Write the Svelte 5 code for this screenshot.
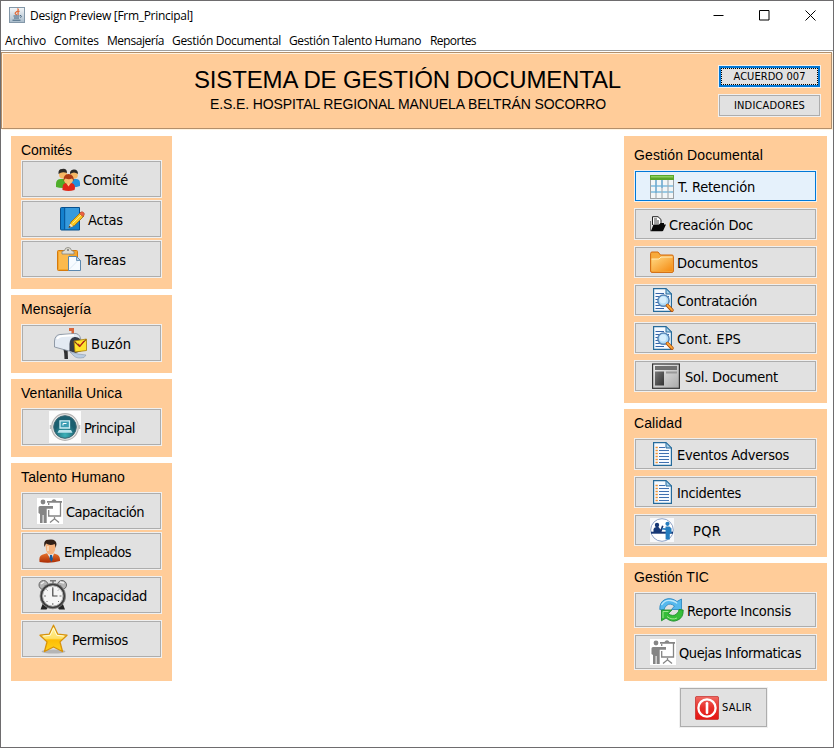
<script>
  const menus = [
    { text: 'Archivo', w: 41, gap: 8 },
    { text: 'Comites', w: 45, gap: 8 },
    { text: 'Mensajería', w: 57, gap: 8 },
    { text: 'Gestión Documental', w: 109, gap: 8 },
    { text: 'Gestión Talento Humano', w: 132, gap: 9 },
    { text: 'Reportes', w: 46, gap: 0 }
  ];

  // x: icon inset inside the button, gap: icon to caption, w: caption width, mt: space above
  const left = [
    {
      title: 'Comités', w: 51, head: 24, height: 153,
      items: [
        { icon: 'people', x: 34, gap: 3, text: 'Comité', w: 45, drop: true },
        { icon: 'book', x: 38, gap: 2, text: 'Actas', w: 35, mt: 2 },
        { icon: 'clipboard', x: 35, gap: 4, text: 'Tareas', w: 41, mt: 2 }
      ]
    },
    {
      title: 'Mensajería', w: 70, head: 29, height: 78,
      items: [{ icon: 'mailbox', x: 32, gap: 4, text: 'Buzón', w: 40 }]
    },
    {
      title: 'Ventanilla Unica', w: 101, head: 29, height: 78,
      items: [{ icon: 'terminal', x: 27, gap: 3, text: 'Principal', w: 51 }]
    },
    {
      title: 'Talento Humano', w: 104, head: 29, height: 218,
      items: [
        { icon: 'training', x: 15, gap: 3, text: 'Capacitación', w: 78 },
        { icon: 'employee', x: 17, gap: 3, text: 'Empleados', w: 67 },
        { icon: 'clock', x: 16, gap: 4, text: 'Incapacidad', w: 75 },
        { icon: 'star', x: 17, gap: 4, text: 'Permisos', w: 56 }
      ].map((it, i) => ({ ...it, mt: [0, 2, 6, 6][i] }))
    }
  ];

  const right = [
    {
      title: 'Gestión Documental', w: 129, head: 34, height: 267, tall: true,
      items: [
        { icon: 'table', x: 15, gap: 4, text: 'T. Retención', w: 77, hot: true, drop: true },
        { icon: 'blackfolder', x: 15, gap: 3, text: 'Creación Doc', w: 84 },
        { icon: 'folder', x: 15, gap: 3, text: 'Documentos', w: 81 },
        { icon: 'search', x: 15, gap: 3, text: 'Contratación', w: 80 },
        { icon: 'search', x: 15, gap: 3, text: 'Cont. EPS', w: 64 },
        { icon: 'layout', x: 17, gap: 5, text: 'Sol. Document', w: 93 }
      ].map((it, i) => ({ ...it, h: 32, mt: i ? 6 : 0 }))
    },
    {
      title: 'Calidad', w: 48, head: 29, height: 148,
      items: [
        { icon: 'list', x: 15, gap: 3, text: 'Eventos Adversos', w: 112 },
        { icon: 'list', x: 15, gap: 3, text: 'Incidentes', w: 64 },
        { icon: 'service', x: 15, gap: 19, text: 'PQR', w: 28 }
      ].map((it, i) => ({ ...it, h: 32, mt: i ? 6 : 0 }))
    },
    {
      title: 'Gestión TIC', w: 75, head: 29, height: 118,
      items: [
        { icon: 'refresh', x: 24, gap: 3, text: 'Reporte Inconsis', w: 104, h: 36 },
        { icon: 'training', x: 15, gap: 3, text: 'Quejas Informaticas', w: 122, h: 36, mt: 6 }
      ]
    }
  ];

  // Spreads the letters of a caption so that it fills the given width.
  function fit(node, width) {
    const natural = node.getBoundingClientRect().width;
    node.style.letterSpacing = (width - natural) / node.textContent.length + 'px';
  }
</script>

{#snippet icon(name)}
  {#if name === 'people'}
    <svg width="24" height="24" viewBox="0 0 24 24">
      <path d="M0 16q0-5 5-5h4q4 0 4 5v3q-7 2-13 0z" fill="#4fae2a" />
      <path d="M13 15q0-4 4-4h3q4 0 4 4v3q-5 2-11 1z" fill="#2491dd" />
      <circle cx="7" cy="6.500" r="4" fill="#f6b765" />
      <circle cx="18" cy="7" r="3.800" fill="#f6b765" />
      <path d="M2.500 6Q2 1 6 1q5-1 5 4Q6 3 2.500 6z" fill="#2d2b29" />
      <path d="M14 6q-.5-4 3.500-4.500Q22 1 22 6q-4-3-8 0z" fill="#2d2b29" />
      <path d="M6.500 20q0-5 4-5h4q4.500 0 4.500 5l-.5 2q-6 2-12 0z" fill="#e02718" />
      <circle cx="12.500" cy="11.500" r="4.600" fill="#f9bf70" />
      <path d="M7.500 13.500Q7 6 12.500 6T18 13.500q-1-2-2-3-3 1.500-6.500 0-1.500 1-2 3z" fill="#ae3b14" />
      <path d="M10.500 15.500l2 3 2-3z" fill="#fbd08d" />
    </svg>
  {:else if name === 'book'}
    <svg width="26" height="24" viewBox="0 0 26 24">
      <path d="M.5 1.500Q.5.5 1.500.5h18v22.500h-18q-1 0-1-1z" fill="#1581cd" stroke="#07508e" />
      <path d="M4.500 1v22" stroke="#0a5c9f" />
      <path d="M5.500 1h13.500v10L9 22H5.500z" fill="#54afea" opacity=".55" />
      <path d="M9 20.500l2-5.500L20.500 5.500l3.500 3.500L14.500 18.500z" fill="#f9c51f" stroke="#9a6810" stroke-width=".8" />
      <path d="M12.500 16.500L21.800 7.300" stroke="#fff08b" />
      <path d="M19.500 6.500l1.500-1.500q1.200-.8 2.700.6 1.200 1.400.3 2.600l-1.200 1.300z" fill="#ee6144" stroke="#a9452d" stroke-width=".6" />
      <path d="M8.500 21l1.700-4.500 3 2.700z" fill="#f4e2bd" /><path d="M8.500 21l1-2.200 1.300 1.200z" fill="#222" />
    </svg>
  {:else if name === 'clipboard'}
    <svg width="24" height="24" viewBox="0 0 24 24">
      <rect x=".5" y="3.500" width="20" height="20" rx="1" fill="#f4a62d" stroke="#d67a0b" />
      <path d="M2 5h10v17H2z" fill="#ffc35b" opacity=".7" />
      <path d="M5 7V4.500l2.500-1Q8 .5 11 .5t3.500 3l2.500 1V7z" fill="#dedcd2" stroke="#85847d" stroke-width=".8" />
      <circle cx="11" cy="3" r="1" fill="#777" />
      <path d="M11.500 9.500h8l4 4v10h-12z" fill="#f7fbff" stroke="#5c87ad" />
      <path d="M19.500 9.500v4h4z" fill="#bcd5eb" stroke="#5c87ad" stroke-width=".8" />
      <path d="M12.500 22l8-8" stroke="#dce8f3" />
    </svg>
  {:else if name === 'mailbox'}
    <svg width="33" height="32" viewBox="0 0 33 32">
      <path d="M9 20h4.500l.5 12h-3.500l-.3-6z" fill="#303030" />
      <path d="M17.500 8V4H15V1h5v8z" fill="#d9663c" />
      <path d="M.5 20V14Q1 8 6 7.500l16-1q5 1 5 9v6L15 24z" fill="#e3eaf3" stroke="#7b8796" stroke-width=".8" />
      <path d="M3 12q2-3 5-3l12-.8" stroke="#fff" stroke-width="2" fill="none" />
      <path d="M15.500 24v-7q0-6 5-7 6-.5 7 6v8l-6 2z" fill="#353b48" />
      <path d="M16 25l8 2 8 1-2 2.500q-7 1.500-10-1.500z" fill="#b9cce3" stroke="#8998ab" stroke-width=".6" />
      <path d="M20 14l12.500-2v11.500L21 25z" fill="#ffe32e" stroke="#a77e06" stroke-width=".8" />
      <path d="M20.500 14.500l5 5 6.500-7" fill="none" stroke="#7a3a18" stroke-width="1.100" />
      <path d="M24 17l2 2 4-5" fill="none" stroke="#c2201a" stroke-width="1.200" />
    </svg>
  {:else if name === 'terminal'}
    <svg width="32" height="32" viewBox="0 0 32 32">
      <defs>
        <radialGradient id="teal" cx=".5" cy=".85"><stop offset="0" stop-color="#3ab2b9" /><stop offset="1" stop-color="#1b5f70" /></radialGradient>
      </defs>
      <rect width="32" height="32" fill="#fcfcfc" />
      <circle cx="16" cy="16" r="13.300" fill="#e6e6e6" stroke="#b4b4b4" stroke-width="1.200" />
      <path d="M1.500 14v4M30.500 14v4" stroke="#bbb" stroke-width="1.500" />
      <circle cx="16" cy="16" r="11.300" fill="url(#teal)" stroke="#3a6672" />
      <path d="M11 9.800h9.500v7.200H11z" fill="#3c9db2" stroke="#cceef5" stroke-width="1.300" />
      <path d="M14 14.500V12.500h3.500" fill="none" stroke="#fff" />
      <path d="M10 19h12l1.500 2.800h-15z" fill="#bce3ec" />
    </svg>
  {:else if name === 'training'}
    <svg width="26" height="26" viewBox="0 0 26 26">
      <rect width="26" height="26" fill="#fff" />
      <g fill="#858585">
        <circle cx="6" cy="4" r="2.400" />
        <path d="M3 8h13v2.700H9.700V25H6.600v-8h-1v8H3v-9L1.500 15V9.500Q1.500 8 3 8z" />
        <path d="M10 3h4.500q.8-1.700 2.500-1.700T19.500 3H25v1.800H10z" />
      </g>
      <path d="M11.700 5v2M23.500 4v14H11.700v-6M17.500 19v1.500M13 24.500l4.500-3.700 4.500 3.700" fill="none" stroke="#858585" stroke-width="1.300" />
    </svg>
  {:else if name === 'employee'}
    <svg width="22" height="24" viewBox="0 0 22 24">
      <defs>
        <linearGradient id="coat" x2="0" y2="1"><stop offset="0" stop-color="#e9752c" /><stop offset="1" stop-color="#a92b04" /></linearGradient>
      </defs>
      <path d="M.5 22q-1-6 5-7l3-1h5l3 1q5 1 4.500 7-10 3-20.500 1z" fill="url(#coat)" />
      <path d="M8 14h7l-2.500 8z" fill="#dfeffa" />
      <path d="M11 16h2l1 4-1.500 3-2-3z" fill="#195b9c" />
      <path d="M6.500 6q0-4 5-4t5 5q0 5-2 7.500-3 2.500-6 0-2-3-2-8.500z" fill="#f6b27d" />
      <path d="M5.500 8Q4 1 9 .7 17-.8 17.500 5l-.8 4-1-4Q11 7 7 4.500z" fill="#322017" />
      <path d="M9 7v5" stroke="#fbd6b1" stroke-width="2" />
    </svg>
  {:else if name === 'clock'}
    <svg width="30" height="30" viewBox="0 0 30 30">
      <path d="M5 23l-2.500 6.500h6l2-3zM24.500 23l2.500 6.500h-6l-2-3z" fill="#242424" />
      <circle cx="5.500" cy="5" r="4.500" fill="#b5b5b5" stroke="#666" />
      <circle cx="24" cy="5" r="4.500" fill="#b5b5b5" stroke="#666" />
      <path d="M3 4l3-2M22 2l4 1" stroke="#eee" stroke-width="1.500" />
      <path d="M12 .8h6M15 1v3" stroke="#777" stroke-width="1.500" />
      <circle cx="14.800" cy="16" r="12.800" fill="#3d3d3d" stroke="#888" stroke-width=".8" />
      <circle cx="14.800" cy="16" r="10.200" fill="#f5f5f5" stroke="#b4b4b4" />
      <path d="M14.800 7v2M14.800 23v2M6 16h2M21.500 16h2M8.500 9.500l1 1M21 9.500l-1 1M8.500 22l1-1M21 22l-1-1" stroke="#777" />
      <path d="M14.800 8.500v7.500h4.700" fill="none" stroke="#444" stroke-width="1.200" />
    </svg>
  {:else if name === 'star'}
    <svg width="29" height="30" viewBox="0 0 29 30">
      <defs>
        <linearGradient id="gold" x2="0" y2="1"><stop offset="0" stop-color="#fff7a8" /><stop offset=".5" stop-color="#ffe066" /><stop offset=".56" stop-color="#fdbd05" /><stop offset="1" stop-color="#ffd31e" /></linearGradient>
      </defs>
      <ellipse cx="14.500" cy="27.500" rx="12" ry="2" fill="#aaa" opacity=".8" />
      <path d="M14.500 1.200l4.300 9 9.200 1-7 6.700 2.500 9.600-9-4.500-9 4.500L8 17.900l-7-6.700 9.200-1z" fill="url(#gold)" stroke="#d7920c" stroke-width="1.300" stroke-linejoin="round" />
      <path d="M14.500 4l-3.300 7.300-7 .8M14.500 4l3.300 7.300 7 .8" fill="none" stroke="#fffbd6" />
    </svg>
  {:else if name === 'table'}
    <svg width="24" height="24" viewBox="0 0 24 24">
      <rect x=".5" y=".5" width="23" height="23" fill="#f3f6f7" stroke="#9ba1a5" />
      <path d="M0 0h24v5H0z" fill="#59a62a" /><path d="M1 1h22v1.500H1z" fill="#8fd05b" />
      <path d="M1 11h22M1 17h22" stroke="#7fbde0" stroke-width="1.300" />
      <path d="M6 5v18.500M12 5v18.500M18 5v18.500" stroke="#a7b0b5" stroke-width="1.200" />
      <path d="M6 5v13M12 5v8" stroke="#5eabdb" stroke-width="1.200" />
    </svg>
  {:else if name === 'blackfolder'}
    <svg width="16" height="16" viewBox="0 0 16 16">
      <path d="M2.500 9V.7H8L11 3.500V8" fill="#fff" stroke="#222" />
      <path d="M4 3h3M4 5h5M4 7h5" stroke="#444" />
      <path d="M.5 5v10h12" fill="none" stroke="#777" />
      <path d="M1 15l2.500-6.500H9L10.500 7H14v1.500h2L13 15z" fill="#080808" />
    </svg>
  {:else if name === 'folder'}
    <svg width="24" height="22" viewBox="0 0 24 22">
      <defs>
        <linearGradient id="manila" x2="1" y2="1"><stop offset="0" stop-color="#ffd984" /><stop offset="1" stop-color="#f58b12" /></linearGradient>
      </defs>
      <path d="M.6 20V2.500Q.6 1 2 1h6l2.500 3H22q1.400 0 1.400 1.500V20q0 1.400-1.400 1.400H2Q.6 21.400.6 20z" fill="#f8aa3c" stroke="#d2690c" />
      <path d="M1.500 20V8H9l2-2h11.500v14z" fill="url(#manila)" />
      <path d="M1.500 8H9l2-2h11.500" fill="none" stroke="#ffedbe" />
    </svg>
  {:else if name === 'search' || name === 'list'}
    <svg width="24" height="24" viewBox="0 0 24 24">
      <path d="M3.600.6h12.400l5.400 5.400v17.400H3.600z" fill="#f6faff" stroke="#266b9b" stroke-width="1.200" />
      <path d="M16 .6V6h5.400z" fill="#a9d2ed" stroke="#266b9b" />
      {#if name === 'list'}
        <path d="M9 5.500h6M9 8.500h10M9 11.500h10M9 14.500h10M9 17.500h10M9 20.500h10" stroke="#3f70b0" />
        <path d="M5.500 5.500h2.300M5.500 8.500h2.300M5.500 11.500h2.300M5.500 14.500h2.300M5.500 17.500h2.300M5.500 20.500h2.300" stroke="#f09231" stroke-width="1.300" />
      {:else}
        <path d="M5.500 5.500H14M5.500 8.500H19M5.500 11.500h13M5.500 14.500h13M5.500 17.500h12M5.500 20.500H14" stroke="#3564a8" />
        <circle cx="13.500" cy="12.700" r="5.600" fill="#b3ddf7" stroke="#5886b7" stroke-width="1.500" />
        <circle cx="13" cy="12" r="3.400" fill="#dff2fe" opacity=".8" />
        <path d="M17.500 17.500l4.500 4.700" stroke="#b3510c" stroke-width="3.400" stroke-linecap="round" />
        <path d="M17.500 17.300l4.500 4.700" stroke="#ffac38" stroke-width="1.800" stroke-linecap="round" />
      {/if}
    </svg>
  {:else if name === 'layout'}
    <svg width="28" height="26" viewBox="0 0 28 26">
      <defs>
        <linearGradient id="page" x2="1" y2="1"><stop offset="0" stop-color="#f2f2f2" /><stop offset="1" stop-color="#a8a8a8" /></linearGradient>
        <linearGradient id="block" x2="1" y2="1"><stop offset="0" stop-color="#777" /><stop offset="1" stop-color="#333" /></linearGradient>
      </defs>
      <rect x=".6" y="1" width="26.800" height="24.300" fill="url(#page)" stroke="#333" stroke-width="1.200" />
      <path d="M3 3h22v4H3z" fill="#707070" /><path d="M3 8.500h9V22.500H3z" fill="url(#block)" />
      <path d="M14 8.500h11v2H14z" fill="#999" />
    </svg>
  {:else if name === 'service'}
    <svg width="24" height="24" viewBox="0 0 24 24">
      <rect width="24" height="24" fill="#f7f8fa" />
      <circle cx="12" cy="12" r="11.300" fill="#fff" stroke="#8ea2c6" />
      <circle cx="7" cy="7" r="2.200" fill="#173876" />
      <path d="M3.500 14v-3q1-2 3-2h2l2 2.500 1.500-4 1.500.5-2 6z" fill="#173876" />
      <path d="M1 13.700h22v2H1z" fill="#173876" />
      <circle cx="17.500" cy="5.800" r="2.100" fill="#247cbe" />
      <path d="M15.500 8.500h4l2 2v5h-1.700v6h-4.200V12l-3.500-.5V10l3.400.2z" fill="#247cbe" />
    </svg>
  {:else if name === 'refresh'}
    <svg width="25" height="24" viewBox="0 0 25 24">
      <path d="M.8 11.500Q.5 4 6 1.500 12-1 18 3.500L22.500 1v10.500H12.500L15.500 8Q11 4.500 7.500 7.500 5 10 5 12z" fill="#55b8ed" stroke="#2281be" stroke-width=".8" />
      <path d="M2.500 7Q6 1.500 11.500 2.500T18 5.500" stroke="#bce7fc" stroke-width="1.300" fill="none" />
      <path d="M24.200 12q.3 7.500-5.200 10Q13 25 7 20l-4.500 2.800V12h10.300l-3.500 3.700q4.700 3.300 8.200.3 2.500-2.300 2.500-4.500z" fill="#36bd38" stroke="#168624" stroke-width=".8" />
      <path d="M4 20v-6.500h5.500M8 18.500q5 4 10 1.500" stroke="#9be88c" fill="none" />
    </svg>
  {:else if name === 'power'}
    <svg width="24" height="24" viewBox="0 0 24 24">
      <defs>
        <linearGradient id="red" x2="0" y2="1"><stop offset="0" stop-color="#f16c64" /><stop offset=".5" stop-color="#e72d28" /><stop offset="1" stop-color="#e41513" /></linearGradient>
      </defs>
      <rect x=".4" y=".4" width="23.200" height="23.200" rx="1.500" fill="url(#red)" stroke="#c4302c" stroke-width=".8" />
      <circle cx="12" cy="12" r="8.600" fill="none" stroke="#fff" stroke-width="2.300" />
      <path d="M12 7.200v9.600" stroke="#fff" stroke-width="2.600" stroke-linecap="round" />
    </svg>
  {/if}
{/snippet}

{#snippet panel(p)}
  <section class="panel" style:height="{p.height}px">
    <h2 class:low={p.tall} style:height="{p.head}px"><span use:fit={p.w}>{p.title}</span></h2>
    {#each p.items as it}
      <button class="btn" class:hot={it.hot} class:drop={it.drop} style:height="{it.h ?? 38}px" style:margin-top="{it.mt ?? 0}px" style:padding-left="{it.x}px" style:gap="{it.gap}px">
        {@render icon(it.icon)}
        <span class="label" use:fit={it.w}>{it.text}</span>
      </button>
    {/each}
  </section>
{/snippet}

<div class="window">
  <header class="titlebar">
    <svg class="java" width="16" height="16" viewBox="0 0 16 16">
      <defs>
        <linearGradient id="tile" x2="0" y2="1"><stop offset="0" stop-color="#f5f7f9" /><stop offset="1" stop-color="#a9bccb" /></linearGradient>
      </defs>
      <rect x=".5" y=".5" width="15" height="15" fill="url(#tile)" stroke="#8397a8" />
      <path d="M8.500 1.500q2 1.500-1 3.300T8 8M10.500 4q-2 1-1.500 2.200T8.800 8" fill="none" stroke="#e3622b" stroke-width="1.200" />
      <path d="M4.500 9h6M5 11h5M3.500 13.200h8M11 8.500q2.500 0 .5 2.200" fill="none" stroke="#41617c" />
    </svg>
    <span class="caption" use:fit={163}>Design Preview [Frm_Principal]</span>
    <div class="controls">
      <svg width="11" height="11" viewBox="0 0 11 11"><path d="M.5 5.500h10" /></svg>
      <svg width="11" height="11" viewBox="0 0 11 11"><path d="M.5.5h9.500V10H.5z" /></svg>
      <svg width="11" height="11" viewBox="0 0 11 11"><path d="M.5.5l10 10M10.500.5l-10 10" /></svg>
    </div>
  </header>
  <nav>
    {#each menus as m}
      <span class="menu" style:width="{m.w + m.gap}px"><span use:fit={m.w}>{m.text}</span></span>
    {/each}
  </nav>
  <div class="banner">
    <div class="titles">
      <h1><span use:fit={427}>SISTEMA DE GESTIÓN DOCUMENTAL</span></h1>
      <p><span use:fit={396}>E.S.E. HOSPITAL REGIONAL MANUELA BELTRÁN SOCORRO</span></p>
    </div>
    <div class="side">
      <button class="btn small focus"><span use:fit={72}>ACUERDO 007</span></button>
      <button class="btn small"><span use:fit={71}>INDICADORES</span></button>
    </div>
  </div>
  <main>
    <div class="col left">
      {#each left as p}{@render panel(p)}{/each}
    </div>
    <div class="col right">
      {#each right as p}{@render panel(p)}{/each}
      <button class="btn exit">
        {@render icon('power')}
        <span use:fit={30}>SALIR</span>
      </button>
    </div>
  </main>
</div>

<style>
  :global(body) {
    margin: 0;
  }
  .window {
    box-sizing: border-box;
    width: 834px;
    height: 748px;
    border: 1px solid #6e6c6e;
    background: #fff;
    color: #000;
    overflow: hidden;
    font-family: 'Liberation Sans', Arial, sans-serif;
  }
  span {
    white-space: nowrap;
  }
  svg {
    display: block;
    flex: none;
  }
  .titlebar {
    display: flex;
    align-items: center;
    height: 29px;
    padding-left: 8px;
    font: 12px/16px 'Open Sans', 'Noto Sans', sans-serif;
  }
  .java {
    margin-bottom: 1px;
  }
  .caption {
    margin-left: 5px;
    padding-top: 1px;
  }
  .controls {
    display: flex;
    gap: 35px;
    margin-left: auto;
    padding-right: 17px;
  }
  .controls svg {
    fill: none;
    stroke: #000;
    stroke-width: 1;
  }
  nav {
    box-sizing: border-box;
    display: flex;
    height: 20px;
    padding: 3px 0 0 4px;
    font: 12px/16px 'Open Sans', 'Noto Sans', sans-serif;
  }
  .banner {
    box-sizing: border-box;
    display: flex;
    width: 831px;
    height: 77px;
    margin-top: 2px;
    border: 1px solid #b38f6b;
    background: #ffcc99;
    box-shadow: inset 1px 1px #fff3e0, 1px 1px #fff3e0, 0 -1px #fff, 1px -1px #fff, 0 -2px #a0a0a0, 1px -2px #a0a0a0;
  }
  .titles {
    box-sizing: border-box;
    width: 717px;
    padding-left: 192px;
  }
  h1 {
    margin: 13px 0 0;
    font: 24px/28px 'Liberation Sans', Arial, sans-serif;
  }
  p {
    margin: 2px 0 0 16px;
    font: 14px/16px 'Liberation Sans', Arial, sans-serif;
  }
  .side {
    display: flex;
    flex-direction: column;
    gap: 6px;
    width: 103px;
    padding-top: 12px;
    margin-left: -1px;
  }
  .btn {
    box-sizing: border-box;
    display: flex;
    align-items: center;
    flex: none;
    width: 100%;
    margin: 0;
    padding: 0;
    border: 1px solid #f0f0f0;
    outline: 1px solid #adadad;
    outline-offset: -2px;
    background: #e1e1e1;
    color: #000;
    font: 14.5px/18px 'DejaVu Sans Condensed', 'DejaVu Sans', Tahoma, sans-serif;
    font-stretch: condensed;
    text-align: left;
  }
  .label {
    padding-top: 2px;
  }
  .btn.drop svg {
    margin-top: 2px;
  }
  .btn.hot {
    background: #e5f1fb;
    outline-color: #0078d7;
  }
  .btn.small {
    height: 23px;
    justify-content: center;
    font-size: 11px;
    line-height: 14px;
  }
  .btn.focus {
    position: relative;
    outline-width: 2px;
    outline-offset: -3px;
    outline-color: #0078d7;
  }
  .btn.focus::after {
    content: '';
    position: absolute;
    inset: 2px;
    border: 1px dotted #000;
  }
  main {
    display: flex;
    justify-content: space-between;
    padding: 7px 6px 0 10px;
  }
  .col {
    display: flex;
    flex-direction: column;
    gap: 6px;
  }
  .left {
    width: 161px;
  }
  .right {
    width: 203px;
  }
  .panel {
    box-sizing: border-box;
    padding: 0 10px;
    background: #ffcc99;
  }
  h2 {
    box-sizing: border-box;
    margin: 0;
    padding-top: 6px;
    font: 14px/16px 'Liberation Sans', Arial, sans-serif;
  }
  h2.low {
    padding-top: 11px;
  }
  .btn.exit {
    width: 89px;
    height: 41px;
    margin-left: 55px;
    padding-left: 15px;
    gap: 3px;
    font-size: 11px;
  }
</style>
